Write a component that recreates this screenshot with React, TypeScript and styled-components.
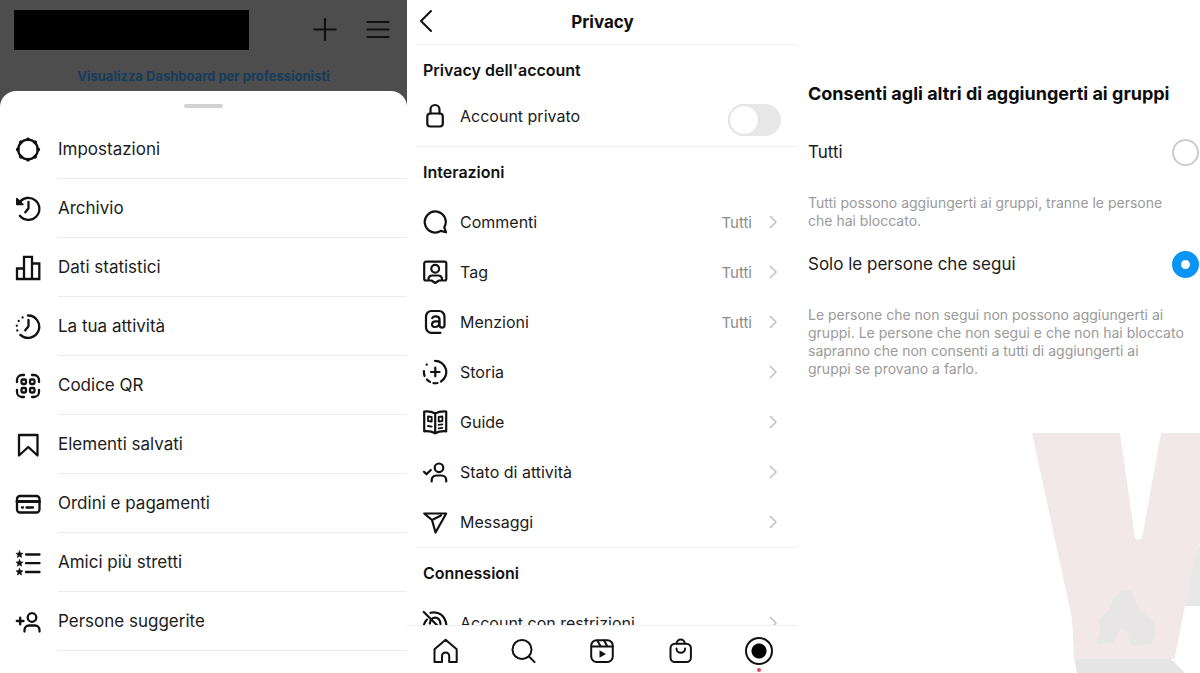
import React, { useState } from "react";
import styled, { createGlobalStyle } from "styled-components";

const GlobalStyle = createGlobalStyle`
  *, *::before, *::after { box-sizing: border-box; }
  body {
    margin: 0;
    background: #fff;
    color: #1c1c1c;
    font-family: Inter, "Liberation Sans", sans-serif;
    overflow: hidden;
  }
  button, input { font: inherit; color: inherit; margin: 0; }
  h1, h2, p, ul { margin: 0; padding: 0; }
`;

const Page = styled.main`
  display: grid;
  grid-template-columns: 407fr 391fr 402fr;
  height: 100vh;
  overflow: hidden;
`;

/* ---------- Menu panel ---------- */

const MenuPanel = styled.section`
  display: flex;
  flex-direction: column;
  background: #4d4d4d;
  min-width: 0;
  overflow: hidden;
`;

const ProfileBar = styled.header`
  display: flex;
  align-items: center;
  gap: 26px;
  height: 60px;
  flex: none;
  padding: 0 16px 0 14px;
`;

const Username = styled.div`
  width: 235px;
  height: 40px;
  margin-right: auto;
  background: #000;
`;

const IconButton = styled.button`
  display: flex;
  padding: 0;
  border: 0;
  background: none;
  color: #111;
  cursor: pointer;
`;

const DashboardLink = styled.a`
  height: 31px;
  flex: none;
  text-align: center;
  font-size: 13px;
  line-height: 33px;
  font-weight: 700;
  color: #153d5c;
  text-decoration: none;
`;

const Sheet = styled.div`
  flex: 1;
  background: #fff;
  border-radius: 16px 16px 0 0;
`;

const Grabber = styled.div`
  width: 39px;
  height: 4px;
  margin: 13px auto 12px;
  border-radius: 2px;
  background: #d2d2d2;
`;

const List = styled.ul`
  list-style: none;
`;

const MenuRow = styled.button`
  display: flex;
  align-items: center;
  gap: 17px;
  width: 100%;
  height: 59px;
  padding: 0 0 0 15px;
  border: 0;
  background: none;
  text-align: left;
  cursor: pointer;
`;

const MenuLabel = styled.span`
  display: flex;
  align-items: center;
  flex: 1;
  height: 59px;
  border-bottom: 1px solid #ebebeb;
  font-size: 17px;
`;

/* ---------- Privacy panel ---------- */

const PrivacyPanel = styled.section`
  display: flex;
  flex-direction: column;
  min-width: 0;
  min-height: 0;
`;

const TitleBar = styled.header`
  display: grid;
  grid-template-columns: 40px 1fr 40px;
  align-items: center;
  height: 44px;
  flex: none;
  padding: 0 6px;
`;

const Title = styled.h1`
  text-align: center;
  font-size: 17px;
  font-weight: 700;
  color: #111;
`;

const Divider = styled.hr`
  flex: none;
  height: 1px;
  margin: 0 0 0 9px;
  border: 0;
  background: #f0f0f0;
`;

const Scroll = styled.div`
  flex: 1;
  min-height: 0;
  overflow: hidden;
`;

const SectionTitle = styled.h2`
  padding: 0 16px;
  font-size: 16px;
  line-height: 50px;
  font-weight: 600;
  color: #111;
`;

const SettingRow = styled.button`
  display: flex;
  align-items: center;
  gap: 12px;
  width: 100%;
  height: 50px;
  padding: 0 17px 0 15px;
  border: 0;
  background: none;
  text-align: left;
  font-size: 16px;
  cursor: pointer;
`;

const SwitchRow = styled.label`
  display: flex;
  gap: 12px;
  height: 51px;
  padding: 8px 17px 0 15px;
  font-size: 16px;
  line-height: 26px;
`;

const RowLabel = styled.span`
  flex: 1;
`;

const RowValue = styled.span`
  margin-right: 1px;
  font-size: 15px;
  color: #8c8c8c;
`;

const Switch = styled.input`
  appearance: none;
  width: 53px;
  height: 32px;
  margin-top: 1px;
  border-radius: 16px;
  background: #e8e8e8;
  cursor: pointer;
  &::before {
    content: "";
    display: block;
    width: 32px;
    height: 32px;
    border: 2px solid #e4e4e4;
    border-radius: 50%;
    background: #fff;
  }
  &:checked { background: #0095f6; }
  &:checked::before { margin-left: 21px; border-color: #0095f6; }
`;

const TabBar = styled.nav`
  display: grid;
  grid-template-columns: repeat(5, 1fr);
  flex: none;
  height: 48px;
  border-top: 1px solid #eeeeee;
  background: #fff;
`;

const Tab = styled.a`
  display: flex;
  flex-direction: column;
  align-items: center;
  gap: 3px;
  padding-top: 12px;
  color: #111;
`;

const AvatarTab = styled(Tab)`
  padding-top: 11px;
`;

const Avatar = styled.span`
  width: 28px;
  height: 28px;
  border: 2px solid #111;
  border-radius: 50%;
  background: radial-gradient(circle, #000 0 7px, #fff 8px);
`;

const Dot = styled.span`
  width: 4px;
  height: 4px;
  border-radius: 50%;
  background: #ed3f5c;
`;

/* ---------- Groups panel ---------- */

const GroupsPanel = styled.section`
  display: flex;
  flex-direction: column;
  min-width: 0;
  padding-top: 82px;
`;

const GroupsForm = styled.fieldset`
  min-width: 0;
  margin: 0;
  padding: 0 1px 0 10px;
  border: 0;
`;

const Legend = styled.legend`
  padding: 0;
  font-size: 18px;
  line-height: 24px;
  font-weight: 700;
  color: #0c0c0c;
  white-space: nowrap;
`;

const Option = styled.label`
  display: flex;
  align-items: center;
  justify-content: space-between;
  height: 28px;
  margin-top: 32px;
  font-size: 17px;
  & + p + & { margin-top: 20px; }
`;

const Radio = styled.input`
  appearance: none;
  width: 27px;
  height: 27px;
  border: 2px solid #cccccc;
  border-radius: 50%;
  background: #fff;
  cursor: pointer;
  &:checked { border: 9px solid #0a95f6; }
`;

const Hint = styled.p`
  margin-top: 28px;
  font-size: 14px;
  line-height: 18px;
  color: #9a9a9a;
  white-space: nowrap;
`;

const Watermark = styled.svg`
  display: block;
  align-self: flex-end;
  flex: none;
  margin-top: auto;
`;

/* ---------- Icons, drawn on a 26 unit grid ---------- */

const Glyph = ({ weight = 2, children }: { weight?: number; children: React.ReactNode }) => (
  <svg
    width="26"
    height="26"
    viewBox="0 0 26 26"
    fill="none"
    stroke="#111"
    strokeWidth={weight}
    strokeLinecap="round"
    strokeLinejoin="round"
    aria-hidden="true"
  >
    {children}
  </svg>
);

const gearBumps = [0, 45, 90, 135, 180, 225, 270, 315];

const icons: Record<string, React.ReactNode> = {
  plus: <path d="M12 2v21M1.500 12.500h21" />,
  menu: <path d="M2.500 5h21M2.500 12.500h21M2.500 20h21" />,
  gear: (
    <>
      <circle cx="13" cy="12.500" r="9.800" />
      {gearBumps.map((a) => (
        <circle key={a} cx="13" cy="2.300" r="1.900" fill="#111" stroke="none" transform={`rotate(${a} 13 12.500)`} />
      ))}
    </>
  ),
  archive: (
    <>
      <path d="M4.200 6.800A11 11 0 1 1 4.800 19.800M13.500 6v6.300l-3.200 4" />
      <path d="M1.800 2.500v6h6.200z" fill="#111" strokeWidth="1.500" />
    </>
  ),
  stats: <path d="M2 13.500h7v10.500H2zM9 1.800h8V24H9zM17 8.500h7.300V24H17z" strokeLinejoin="miter" />,
  activity: (
    <>
      <path d="M13 1.500a11.200 11.200 0 1 1-7.600 19.400M13.500 6v6.300l-3.200 4" />
      <path d="M2.300 16.500v.1M1.800 11.700v.1M3.700 7v.1M7.600 3.400v.1" />
    </>
  ),
  qr: (
    <>
      <path d="M2 9V7a5 5 0 0 1 5-5h2M17 2h2a5 5 0 0 1 5 5v2M24 17v2a5 5 0 0 1-5 5h-2M9 24H7a5 5 0 0 1-5-5v-2" />
      <rect x="6.500" y="6.500" width="4.500" height="4.500" rx="1.300" />
      <rect x="15" y="6.500" width="4.500" height="4.500" rx="1.300" />
      <rect x="6.500" y="15" width="4.500" height="4.500" rx="1.300" />
      <rect x="15" y="15" width="4.500" height="4.500" rx="1.300" />
    </>
  ),
  bookmark: <path d="M4 3h18.500v20.500L13.300 15 4 23.500z" />,
  card: (
    <>
      <rect x="2" y="5" width="22.500" height="16.500" rx="3" />
      <path d="M2 10.500h22.500" strokeWidth="3" />
      <path d="M7 16.500h1M11.500 16.500h6.500" />
    </>
  ),
  closeFriends: (
    <>
      <path d="M11 4.500h13.500M11 13.200h13.500M11 22h13.500" />
      {[4.5, 13.2, 22].map((y) => (
        <path
          key={y}
          transform={`translate(4.500 ${y})`}
          d="M0-3.800L1-1.400 3.600-1.200 1.600.5 2.200 3.100 0 1.700-2.200 3.100-1.600.5-3.600-1.200-1-1.400z"
          fill="#111"
          strokeWidth=".5"
        />
      ))}
    </>
  ),
  addPerson: (
    <>
      <circle cx="17" cy="8.500" r="4.300" />
      <path d="M9.500 22.500v-1.500a4.500 4.500 0 0 1 4.500-4.500h6a4.500 4.500 0 0 1 4.500 4.500v1.500M1.800 12h6.700M5.200 8.700v6.700" />
    </>
  ),
  lock: (
    <>
      <rect x="5.300" y="10.500" width="15.500" height="13" rx="3" />
      <path d="M8.500 10.500V6.500a4.500 4.500 0 0 1 9 0v4" />
    </>
  ),
  comment: <path d="M22.300 18.300A10.500 10.500 0 1 0 18.800 21.900L24 23.300z" />,
  tag: (
    <>
      <path d="M9.500 21.500H4A1.800 1.800 0 0 1 2.200 19.700V4.500A1.800 1.800 0 0 1 4 2.700h18.500a1.800 1.800 0 0 1 1.800 1.800v15.200a1.800 1.800 0 0 1-1.800 1.800H17L13.200 24z" />
      <circle cx="13.200" cy="9.800" r="3.900" />
      <path d="M6.500 20.500c0-3 1.500-4 4-4h5.500c2.500 0 4 1 4 4" />
    </>
  ),
  mention: (
    <>
      <path d="M18.500 23.800H9.500A5.500 5.500 0 0 1 4 18.300V7.500A5.500 5.500 0 0 1 9.500 2H17a5.500 5.500 0 0 1 5.500 5.500v9.300c0 2.300-4.500 2.500-5-.3V10.500c0-3.600-5.700-4-7.300-1.500" />
      <path d="M17.300 12.300h-3.800c-4.500 0-4.500 5.700-1 5.700 2.700 0 4.800-1.500 4.800-4" />
    </>
  ),
  story: (
    <>
      <path d="M13 1.800a11.200 11.200 0 0 1 6 20.700" />
      <path d="M15.500 24a11 11 0 0 1-4 .1M8 22.900a11 11 0 0 1-3-2.400M2.600 17a11 11 0 0 1-.7-5M4.600 5.700l.2-.2M13.300 8.700v8.600M9 13h8.600" />
    </>
  ),
  guide: (
    <>
      <path d="M13.200 4.500C10 2.700 6 2.200 2.200 2.500v19.800c4-.3 8 .3 11 2 3-1.700 7-2.300 11-2V2.500c-3.800-.3-7.800.2-11 2zM13.200 4.500v19.500" />
      <path d="M6 7.500l3.700.5v4.500L6 12zM20.400 7.500l-3.700.5v4.500l3.700-.5zM6 17l3.700.7M16.700 15.800l3.700-.5M16.700 19.300l3.700-.5" strokeWidth="1.800" />
    </>
  ),
  status: (
    <>
      <circle cx="17" cy="8.800" r="4.300" />
      <path d="M9.700 22.500v-1.500a4.500 4.500 0 0 1 4.500-4.500h5.500a4.500 4.500 0 0 1 4.500 4.500v1.500M2 12.800l2.500 2.500 4.300-4.300" />
    </>
  ),
  send: <path d="M2.200 4.500h22L13.500 23.500 10 11zM10 11l9-4.500" />,
  restricted: (
    <>
      <path d="M1.800 2l20 20M5 9.500C3.500 11 2.500 12.500 2 14.500M8.500 2.800C17 .8 23 6 24.300 14.500" />
      <path d="M7.800 13.500c1-8 10-8 10.700.5" />
    </>
  ),
  home: <path d="M9 24v-6a3.600 3.600 0 0 1 7.200 0v6h7.500V11.200L12.600 1.700 1.500 11.200V24z" />,
  search: (
    <>
      <circle cx="11" cy="11.500" r="9.500" />
      <path d="M18 18.500l5.600 5.600" />
    </>
  ),
  reels: (
    <>
      <rect x="2.200" y="2.200" width="21.600" height="21.800" rx="5.500" />
      <path d="M2.500 8.500h21M8.300 2.500l3.500 6M15 2.500l3.500 6" />
      <path d="M10.500 12.200l6.500 3.800-6.500 3.800z" fill="#111" stroke="none" />
    </>
  ),
  shop: (
    <>
      <rect x="2.500" y="5.700" width="20.400" height="18.300" rx="4.500" />
      <path d="M8.700 5.500a4 4 0 0 1 8 0M8.500 10.500a4.300 4.300 0 0 0 8.600 0" />
    </>
  ),
  back: <path d="M18 2L8 12l10 10" />,
};

const Chevron = () => (
  <svg width="16" height="16" viewBox="0 0 16 16" fill="none" stroke="#c0c0c0" strokeWidth="1.500" aria-hidden="true">
    <path d="M5 2l6 6-6 6" />
  </svg>
);

const menuItems = [
  ["gear", "Impostazioni"],
  ["archive", "Archivio"],
  ["stats", "Dati statistici"],
  ["activity", "La tua attività"],
  ["qr", "Codice QR"],
  ["bookmark", "Elementi salvati"],
  ["card", "Ordini e pagamenti"],
  ["closeFriends", "Amici più stretti"],
  ["addPerson", "Persone suggerite"],
];

const interactions = [
  { icon: "comment", label: "Commenti", value: "Tutti" },
  { icon: "tag", label: "Tag", value: "Tutti" },
  { icon: "mention", label: "Menzioni", value: "Tutti" },
  { icon: "story", label: "Storia" },
  { icon: "guide", label: "Guide" },
  { icon: "status", label: "Stato di attività" },
  { icon: "send", label: "Messaggi" },
];

const tabs = [
  ["home", "Home"],
  ["search", "Cerca"],
  ["reels", "Reels"],
  ["shop", "Shop"],
];

const Setting = ({ icon, label, value }: { icon: string; label: string; value?: string }) => (
  <SettingRow type="button">
    <Glyph weight={2.2}>{icons[icon]}</Glyph>
    <RowLabel>{label}</RowLabel>
    {value && <RowValue>{value}</RowValue>}
    <Chevron />
  </SettingRow>
);

export default function App() {
  const [isPrivate, setIsPrivate] = useState(false);
  const [audience, setAudience] = useState("following");

  return (
    <>
      <GlobalStyle />
      <Page>
        <MenuPanel>
          <ProfileBar>
            <Username />
            <IconButton type="button" aria-label="Crea">
              <Glyph weight={2.2}>{icons.plus}</Glyph>
            </IconButton>
            <IconButton type="button" aria-label="Menu">
              <Glyph weight={2.2}>{icons.menu}</Glyph>
            </IconButton>
          </ProfileBar>
          <DashboardLink href="#dashboard">Visualizza Dashboard per professionisti</DashboardLink>
          <Sheet>
            <Grabber />
            <List>
              {menuItems.map(([icon, label]) => (
                <li key={icon}>
                  <MenuRow type="button">
                    <Glyph weight={2.3}>{icons[icon]}</Glyph>
                    <MenuLabel>{label}</MenuLabel>
                  </MenuRow>
                </li>
              ))}
            </List>
          </Sheet>
        </MenuPanel>

        <PrivacyPanel>
          <TitleBar>
            <IconButton type="button" aria-label="Indietro">
              <Glyph>{icons.back}</Glyph>
            </IconButton>
            <Title>Privacy</Title>
          </TitleBar>
          <Divider />
          <Scroll>
            <SectionTitle>Privacy dell'account</SectionTitle>
            <SwitchRow>
              <Glyph weight={2.2}>{icons.lock}</Glyph>
              <RowLabel>Account privato</RowLabel>
              <Switch
                type="checkbox"
                role="switch"
                checked={isPrivate}
                onChange={(e) => setIsPrivate(e.target.checked)}
              />
            </SwitchRow>
            <Divider />
            <SectionTitle>Interazioni</SectionTitle>
            {interactions.map((item) => (
              <Setting key={item.icon} {...item} />
            ))}
            <Divider />
            <SectionTitle>Connessioni</SectionTitle>
            <Setting icon="restricted" label="Account con restrizioni" />
          </Scroll>
          <TabBar>
            {tabs.map(([icon, label]) => (
              <Tab key={icon} href={`#${icon}`} aria-label={label}>
                <Glyph>{icons[icon]}</Glyph>
              </Tab>
            ))}
            <AvatarTab href="#profile" aria-label="Profilo">
              <Avatar />
              <Dot />
            </AvatarTab>
          </TabBar>
        </PrivacyPanel>

        <GroupsPanel>
          <GroupsForm>
            <Legend>Consenti agli altri di aggiungerti ai gruppi</Legend>
            <Option>
              Tutti
              <Radio
                type="radio"
                name="audience"
                checked={audience === "everyone"}
                onChange={() => setAudience("everyone")}
              />
            </Option>
            <Hint>
              Tutti possono aggiungerti ai gruppi, tranne le persone
              <br />
              che hai bloccato.
            </Hint>
            <Option>
              Solo le persone che segui
              <Radio
                type="radio"
                name="audience"
                checked={audience === "following"}
                onChange={() => setAudience("following")}
              />
            </Option>
            <Hint>
              Le persone che non segui non possono aggiungerti ai
              <br />
              gruppi. Le persone che non segui e che non hai bloccato
              <br />
              sapranno che non consenti a tutti di aggiungerti ai
              <br />
              gruppi se provano a farlo.
            </Hint>
          </GroupsForm>
          <Watermark width="168" height="240" viewBox="0 0 168 240" aria-hidden="true">
            <path d="M160 124L168 112V173H150z" fill="#e9e8e9" />
            <path d="M42 225H138L153 240H45z" fill="#e6e5e6" />
            <path d="M0 0H88L103 105L106 107L110 105L129 0H168V110L162 126L153 173L143 224V226H42L40 186z" fill="#f3e8e9" />
            <path
              d="M90 157h10l4 14 5 7 12 10 2 14-4 9-20 1-4-13-5-3-4 3-4 11-18 1 4-12-1-12 10-10 5-12z"
              fill="#e7e5e6"
            />
          </Watermark>
        </GroupsPanel>
      </Page>
    </>
  );
}
